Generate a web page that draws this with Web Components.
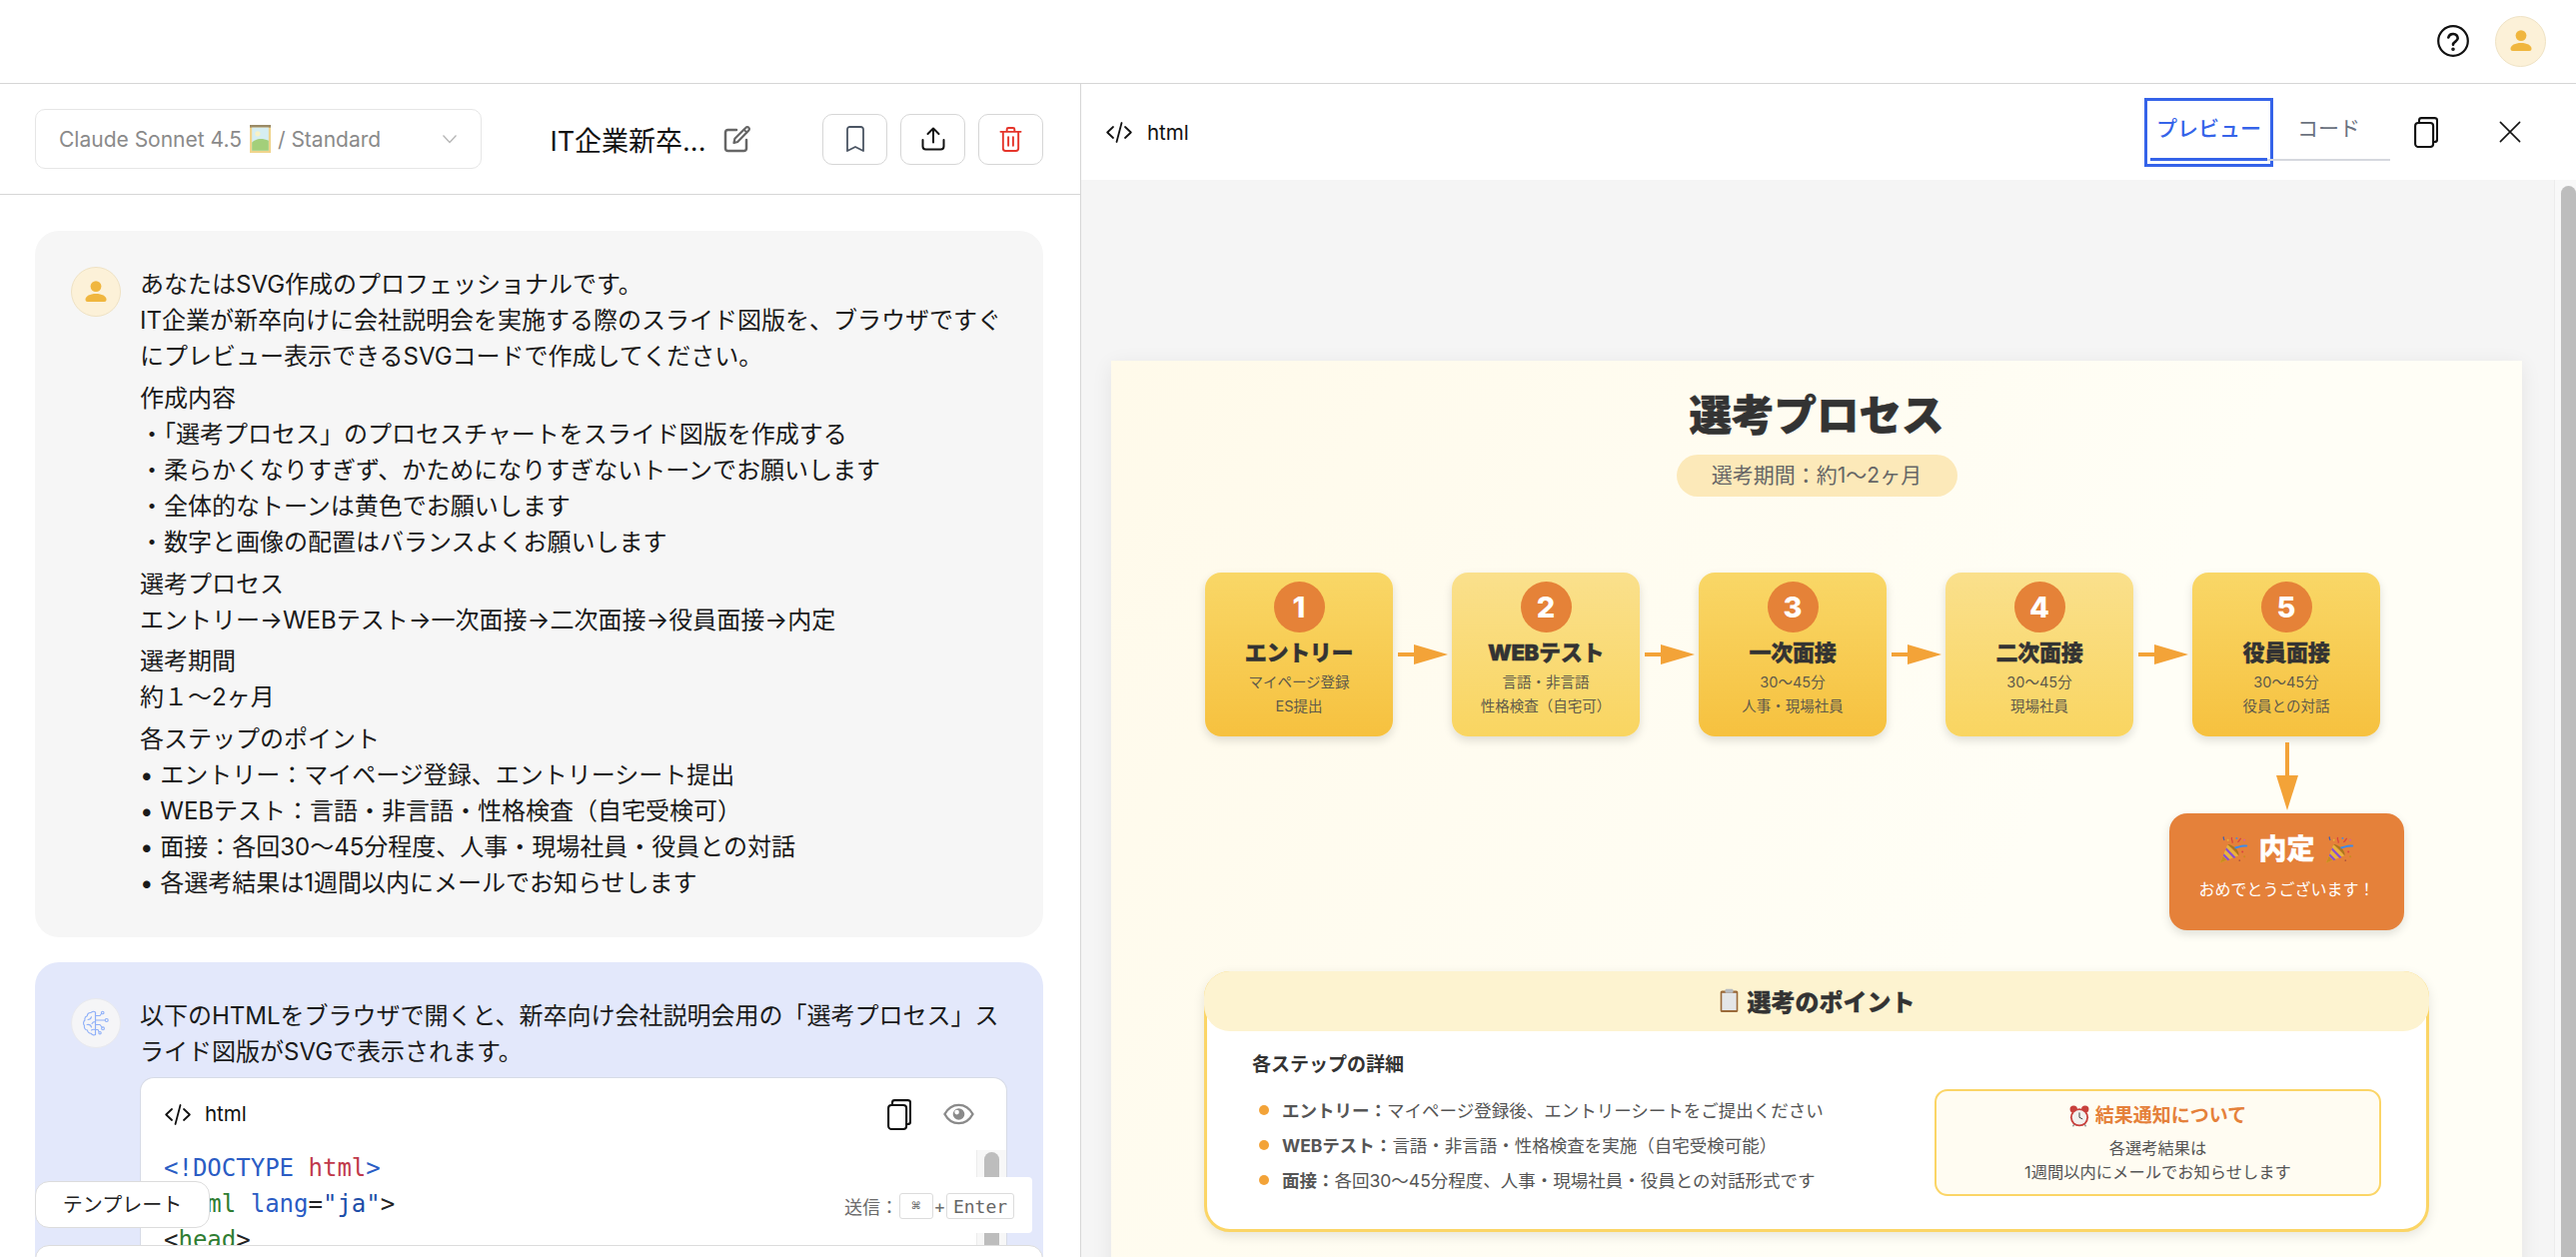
<!DOCTYPE html>
<html lang="ja">
<head>
<meta charset="utf-8">
<title>選考プロセス</title>
<style>
    html, body { margin: 0; height: 100%; overflow: hidden; background: #fff; }
    body { font-family: Inter, "Noto Sans CJK JP", sans-serif; color: #1a1a1a; }
</style>
</head>
<body>
<app-shell></app-shell>
<script>
const ICONS = {
    help: '<svg viewBox="0 0 32 32" fill="none" stroke="currentColor" stroke-width="2.200" stroke-linecap="round"><circle cx="16" cy="16" r="14.800"/><path d="M11.300 12.500a4.800 4.800 0 0 1 9.400 .8c0 3.200-4.700 3.400-4.700 6.400" stroke-width="2.600"/><circle cx="16" cy="24.200" r=".7" fill="currentColor"/></svg>',
    user: '<svg viewBox="0 0 22 22" fill="#f0b63e"><circle cx="11" cy="5.600" r="5.400"/><path d="M.5 18.800C.5 15.400 5 13 11 13s10.500 2.400 10.500 5.800c0 1.400-.8 2.200-2.200 2.200H2.700C1.300 21 .5 20.200.5 18.800z"/></svg>',
    chevron: '<svg viewBox="0 0 16 10" fill="none" stroke="currentColor" stroke-width="1.300"><path d="M1.500 1.500 8 8.500l6.500-7"/></svg>',
    edit: '<svg viewBox="0 0 28 28" fill="none" stroke="currentColor" stroke-width="2.500" stroke-linecap="round" stroke-linejoin="round"><path d="M13 5H4.500a2.500 2.500 0 0 0-2.500 2.500v16A2.500 2.500 0 0 0 4.500 26h16a2.500 2.500 0 0 0 2.500-2.500V15"/><path d="M10.500 18l.9-4.200L22.500 2.700a1.900 1.900 0 0 1 2.800 0 1.900 1.900 0 0 1 0 2.800L14.200 17z" stroke-width="2.200"/><path d="M20.500 4.700l2.800 2.800" stroke-width="1.800"/></svg>',
    bookmark: '<svg viewBox="0 0 18 26" fill="none" stroke="currentColor" stroke-width="1.800" stroke-linejoin="round"><path d="M1 3.500A2.500 2.500 0 0 1 3.500 1h11A2.500 2.500 0 0 1 17 3.500V25l-8-4-8 4z"/></svg>',
    upload: '<svg viewBox="0 0 24 24" fill="none" stroke="currentColor" stroke-width="2" stroke-linecap="round" stroke-linejoin="round"><path d="M12 15.500V1.500M6.500 7 12 1.500 17.500 7"/><path d="M1.500 13v6.500a3 3 0 0 0 3 3h15a3 3 0 0 0 3-3V13"/></svg>',
    trash: '<svg viewBox="0 0 24 27" fill="none" stroke="currentColor" stroke-width="2" stroke-linecap="round" stroke-linejoin="round"><path d="M1.500 5.500h21M8 5.500V3A1.500 1.500 0 0 1 9.500 1.500h5A1.500 1.500 0 0 1 16 3V5.500"/><path d="M4 5.500V23a2.500 2.500 0 0 0 2.500 2.500h11A2.500 2.500 0 0 0 20 23V5.500"/><path d="M9.500 11v9M14.500 11v9"/></svg>',
    code: '<svg viewBox="0 0 26 21" fill="none" stroke="currentColor" stroke-width="1.800" stroke-linecap="round" stroke-linejoin="round"><path d="M7 5 1.200 10.500 7 16M19 5l5.800 5.500L19 16M15.500 1l-5 19"/></svg>',
    copy: '<svg viewBox="0 0 24 31" fill="none" stroke="currentColor" stroke-width="2.100" stroke-linejoin="round"><rect x="1.100" y="6" width="18" height="24" rx="3"/><path d="M5 6V3.500A2.400 2.400 0 0 1 7.400 1.100h13.200A2.400 2.400 0 0 1 23 3.500V22.600A2.400 2.400 0 0 1 20.600 25H19"/></svg>',
    close: '<svg viewBox="0 0 24 24" fill="none" stroke="currentColor" stroke-width="1.700" stroke-linecap="round"><path d="M1.500 1.500l21 21M22.500 1.500 1.500 22.500"/></svg>',
    eye: '<svg viewBox="0 0 32 22" fill="none"><path d="M1.500 11C5 4.500 10 1.500 16 1.500S27 4.500 30.500 11C27 17.500 22 20.500 16 20.500S5 17.500 1.500 11z" stroke="#8a8a8a" stroke-width="2.400"/><circle cx="16" cy="11" r="6" fill="#8a8a8a"/><circle cx="14" cy="9" r="2.400" fill="#fff"/></svg>',
    brain: '<svg viewBox="0 0 26 26" fill="none" stroke="#8fb0f8" stroke-width="1.100" stroke-linecap="round" stroke-linejoin="round"><path d="M12.500 2.200A3 3 0 0 0 8 2.500 3.200 3.200 0 0 0 4.300 5.800 3.500 3.500 0 0 0 2 10a3.800 3.800 0 0 0-.5 5.500A3.500 3.500 0 0 0 4.500 20a3.400 3.400 0 0 0 3.800 3.200 3 3 0 0 0 4.200 1.300z"/><path d="M12.500 2.200v22.300M5 9.500c2 0 3-.8 3.500-2.800M4 14.500c2.500-.5 4 .5 4.500 2.500M12.500 11.500c-2 0-3 .8-3.500 2M8.500 20c1-.8 2.200-1 4-.5"/><path d="M12.500 5.500H17l1.500-2M12.500 10H22M12.500 14.500H17l2 2.500M12.500 19.500H15l1 2"/><circle cx="19.700" cy="2.500" r="1.300"/><circle cx="23.700" cy="10" r="1.500"/><circle cx="20" cy="18.300" r="1.400"/><circle cx="17" cy="22.700" r="1.200"/></svg>',
    picture: '<svg viewBox="0 0 24 32"><rect width="24" height="32" fill="#f0d48c"/><rect x="0" y="0" width="24" height="3" fill="#9a8a66"/><rect x="2.500" y="3" width="19" height="26.500" fill="#d6eef2"/><path d="M2.500 20c5-5 12-5 19-2v11.500h-19z" fill="#a3cf7a"/><circle cx="9" cy="10" r="3" fill="#f8f2c6"/></svg>',
    popper: '<svg viewBox="0 0 30 30"><path d="M1 28.500 8.500 9.500 20 21z" fill="#e8b43c"/><path d="M1 28.500l2.800-7 4.200 4.200z" fill="#c98a1f"/><path d="M4.800 19l6.200 6.200-2.300 1L3.900 21.300zM7.300 12.800l9.900 9.900-2.300 1L6.400 15z" fill="#8a4fd0"/><path d="M8.500 9.500c3.500 2 8.500 7 11.500 11.500 1-1.500-1-6-4-8.500s-6.500-4-7.500-3z" fill="#a8761c"/><path d="M16 13c4-.5 7-3 13-2" stroke="#3f8be8" stroke-width="2" fill="none"/><path d="M13.500 8c1-2-1.500-3-.5-6" stroke="#d8433f" stroke-width="1.300" fill="none"/><path d="M19 7c2-1 2-3 3.500-4" stroke="#d8433f" stroke-width="1.300" fill="none"/><path d="M4 1.500c1 1 0 2.500 1.500 3.500" stroke="#3f5fb0" stroke-width="1.300" fill="none"/><circle cx="18" cy="3" r="1" fill="#3f8be8"/><circle cx="26" cy="5" r="1" fill="#d85fa0"/><circle cx="24" cy="17" r="1" fill="#d8433f"/><circle cx="9" cy="5" r="1" fill="#e8b43c"/><circle cx="26" cy="22" r="1" fill="#c98a1f"/><circle cx="21" cy="26" r=".9" fill="#b0563f"/></svg>',
    clipboard: '<svg viewBox="0 0 24 30"><rect x="1" y="3" width="22" height="27" rx="2" fill="#9a6a3a"/><rect x="3" y="6" width="18" height="21.500" fill="#e4e6e8"/><rect x="7" y="1" width="10" height="5" rx="1.500" fill="#b8bcc0"/></svg>',
    alarm: '<svg viewBox="0 0 24 28"><circle cx="5" cy="5" r="4.500" fill="#c8403c"/><circle cx="19" cy="5" r="4.500" fill="#c8403c"/><path d="M4 26l2-3M20 26l-2-3" stroke="#999" stroke-width="2"/><circle cx="12" cy="15" r="11" fill="#c8403c"/><circle cx="12" cy="15" r="8.800" fill="#f2f1ee"/><path d="M12 9v6l4 2" stroke="#444" stroke-width="1.200" fill="none"/></svg>'
};

class AppIcon extends HTMLElement {
    connectedCallback() {
        const w = this.getAttribute('w') || 24;
        const h = this.getAttribute('h') || w;
        this.attachShadow({ mode: 'open' });
        this.shadowRoot.innerHTML = `
            <style>
                :host { display: inline-flex; flex: none; width: ${w}px; height: ${h}px; color: ${this.getAttribute('color') || 'inherit'}; vertical-align: middle; }
                svg { display: block; width: 100%; height: 100%; }
            </style>
            ${ICONS[this.getAttribute('name')] || ''}
        `;
    }
}

class TopBar extends HTMLElement {
    connectedCallback() {
        this.attachShadow({ mode: 'open' });
        this.shadowRoot.innerHTML = `
            <style>
                :host { display: flex; height: 83px; align-items: center; justify-content: flex-end; gap: 26px; padding-right: 30px; border-bottom: 1px solid #d6d6d6; background: #fff; }
                .avatar { display: flex; align-items: center; justify-content: center; width: 49px; height: 49px; border-radius: 50%; background: #fcf1d8; border: 1px solid #efe2c4; margin-bottom: 1px; }
                .help { margin-bottom: 1px; }
            </style>
            <app-icon class="help" name="help" w="32" color="#111"></app-icon>
            <div class="avatar"><app-icon name="user" w="22"></app-icon></div>
        `;
    }
}

class ChatHeader extends HTMLElement {
    connectedCallback() {
        this.attachShadow({ mode: 'open' });
        this.shadowRoot.innerHTML = `
            <style>
                :host { display: flex; align-items: center; height: 110px; padding: 0 37px 0 35px; border-bottom: 1px solid #d6d6d6; background: #fff; }
                .select { display: flex; align-items: center; box-sizing: border-box; width: 448px; height: 60px; padding: 0 23px; border: 1px solid #e6e6e6; border-radius: 10px; font-size: 21px; color: #8a8a8a; white-space: nowrap; }
                .select app-icon { margin: 0 6px 0 7px; }
                .select .chev { margin: 0 0 0 auto; color: #b5b5b5; }
                .title { display: flex; align-items: center; gap: 18px; margin-left: 68px; font-size: 27px; color: #111; white-space: nowrap; width: 273px; }
                .btns { display: flex; gap: 13px; margin-left: auto; }
                .btn { display: flex; align-items: center; justify-content: center; width: 65px; height: 51px; box-sizing: border-box; border: 1px solid #d6d6d6; border-radius: 10px; background: #fff; }
            </style>
            <div class="select">Claude Sonnet 4.5<app-icon name="picture" w="23" h="28"></app-icon>/ Standard<app-icon class="chev" name="chevron" w="16" h="10"></app-icon></div>
            <div class="title"><span>IT企業新卒...</span><app-icon name="edit" w="28" color="#666"></app-icon></div>
            <div class="btns">
                <div class="btn"><app-icon name="bookmark" w="18" h="26" color="#4b5563"></app-icon></div>
                <div class="btn"><app-icon name="upload" w="24" color="#111"></app-icon></div>
                <div class="btn"><app-icon name="trash" w="23" h="27" color="#e5352b"></app-icon></div>
            </div>
        `;
    }
}

class MsgCard extends HTMLElement {
    connectedCallback() {
        const bot = this.getAttribute('role-name') === 'bot';
        this.attachShadow({ mode: 'open' });
        this.shadowRoot.innerHTML = `
            <style>
                :host { display: flex; flex: none; gap: 19px; box-sizing: border-box; padding: 36px; border-radius: 24px; background: ${bot ? '#e3e8fb' : '#f6f6f6'}; font-size: 24px; line-height: 36px; color: #1a1a1a; }
                .avatar { display: flex; flex: none; align-items: center; justify-content: center; box-sizing: border-box; width: 50px; height: 50px; border-radius: 50%; background: ${bot ? '#f5f5f7' : '#fcf1d8'}; border: 1px solid ${bot ? '#e8e9ee' : '#efe2c4'}; }
                .body { flex: 1; min-width: 0; }
            </style>
            <div class="avatar"><app-icon name="${bot ? 'brain' : 'user'}" w="${bot ? 26 : 22}" h="${bot ? 26 : 22}"></app-icon></div>
            <div class="body"><slot></slot></div>
        `;
    }
}

class CodeBlock extends HTMLElement {
    connectedCallback() {
        this.attachShadow({ mode: 'open' });
        this.shadowRoot.innerHTML = `
            <style>
                :host { display: block; position: relative; margin-top: 7px; background: #fff; border: 1px solid #d7dbe6; border-bottom: 0; border-radius: 14px 14px 0 0; }
                .head { display: flex; align-items: center; height: 72px; padding: 0 32px 0 24px; gap: 14px; font-size: 20.500px; color: #111; }
                .head .copy { margin-left: auto; margin-right: 18px; }
                pre { margin: 0; padding: 0 0 0 23px; font: 24px/36px "DejaVu Sans Mono", monospace; color: #222; }
                .b { color: #2a5cc4; } .r { color: #c0394b; } .g { color: #2f7d32; } .n { color: #1d4ea8; }
                .bar { position: absolute; top: 72px; right: 0; bottom: -60px; width: 29px; background: #f7f7f7; border-left: 1px solid #ececec; }
                .thumb { width: 15px; height: 200px; margin: 2px 0 0 7px; border-radius: 8px; background: #bdbdbd; }
            </style>
            <div class="head">
                <app-icon name="code" w="26" h="21"></app-icon><span>html</span>
                <app-icon class="copy" name="copy" w="24" h="31"></app-icon>
                <app-icon name="eye" w="31" h="22"></app-icon>
            </div>
<pre><span class="b">&lt;!DOCTYPE</span> <span class="r">html</span><span class="b">&gt;</span>
<span>&lt;</span><span class="g">html</span> <span class="b">lang</span>=<span class="n">"ja"</span>&gt;
&lt;<span class="g">head</span>&gt;</pre>
            <div class="bar"><div class="thumb"></div></div>
        `;
    }
}

class ChatPanel extends HTMLElement {
    connectedCallback() {
        this.attachShadow({ mode: 'open' });
        this.shadowRoot.innerHTML = `
            <style>
                :host { display: flex; flex-direction: column; position: relative; overflow: hidden; background: #fff; }
                .scroll { flex: 1; display: flex; flex-direction: column; gap: 25px; overflow: hidden; padding: 36px 37px 0 35px; }
                p { margin: 0 0 5.750px; }
                .tmpl { position: absolute; left: 35px; top: 1098px; display: flex; align-items: center; justify-content: center; box-sizing: border-box; width: 175px; height: 47px; padding-bottom: 2px; background: #fff; border: 1px solid #dcdcdc; border-radius: 14px; font-size: 20px; color: #222; }
                .send { position: absolute; left: 830px; top: 1094px; display: flex; align-items: center; box-sizing: border-box; width: 203px; height: 56px; padding: 2px 0 0 15px; background: #fff; border-radius: 4px; font-size: 18px; color: #6b6b6b; white-space: nowrap; }
                kbd { display: flex; align-items: center; justify-content: center; box-sizing: border-box; height: 26px; border: 1px solid #dcdcdc; border-radius: 3px; font: 18px "DejaVu Sans Mono", monospace; color: #666; }
                .k1 { width: 34px; margin-left: 1px; font-size: 15px; }
                .plus { width: 13px; text-align: center; }
                .k2 { width: 68px; }
                .input { position: absolute; left: 35px; right: 37px; top: 1162px; height: 30px; box-sizing: border-box; background: #fff; border: 1px solid #dcdcdc; border-radius: 14px 14px 0 0; }
            </style>
            <chat-header></chat-header>
            <div class="scroll">
                <msg-card role-name="user">
                    <p>あなたはSVG作成のプロフェッショナルです。<br>IT企業が新卒向けに会社説明会を実施する際のスライド図版を、ブラウザですぐにプレビュー表示できるSVGコードで作成してください。</p>
                    <p>作成内容<br>・「選考プロセス」のプロセスチャートをスライド図版を作成する<br>・柔らかくなりすぎず、かためになりすぎないトーンでお願いします<br>・全体的なトーンは黄色でお願いします<br>・数字と画像の配置はバランスよくお願いします</p>
                    <p>選考プロセス<br>エントリー→WEBテスト→一次面接→二次面接→役員面接→内定</p>
                    <p>選考期間<br>約１〜2ヶ月</p>
                    <p style="margin:0">各ステップのポイント<br>• エントリー：マイページ登録、エントリーシート提出<br>• WEBテスト：言語・非言語・性格検査（自宅受検可）<br>• 面接：各回30〜45分程度、人事・現場社員・役員との対話<br>• 各選考結果は1週間以内にメールでお知らせします</p>
                </msg-card>
                <msg-card role-name="bot">
                    <div>以下のHTMLをブラウザで開くと、新卒向け会社説明会用の「選考プロセス」スライド図版がSVGで表示されます。</div>
                    <code-block></code-block>
                </msg-card>
            </div>
            <div class="input"></div>
            <div class="tmpl">テンプレート</div>
            <div class="send">送信：<kbd class="k1">⌘</kbd><span class="plus">+</span><kbd class="k2">Enter</kbd></div>
        `;
    }
}

class PreviewHeader extends HTMLElement {
    connectedCallback() {
        this.attachShadow({ mode: 'open' });
        this.shadowRoot.innerHTML = `
            <style>
                :host { display: flex; align-items: center; height: 96px; padding-left: 25px; background: #fff; font-size: 20.500px; color: #111; }
                .name { margin-left: 15px; }
                .tabs { display: flex; margin-left: auto; height: 57px; }
                .tab { display: flex; align-items: center; justify-content: center; box-sizing: border-box; height: 57px; padding-bottom: 8px; font-size: 21px; }
                .on { width: 117px; color: #3563e9; border-bottom: 3px solid #3563e9; outline: 3px solid #3563e9; outline-offset: 3px; font-weight: 500; }
                .off { width: 123px; color: #6b7280; border-bottom: 2px solid #d5d8de; }
                .copy { margin-left: 24px; }
                .close { margin: 0 55px 0 61px; }
            </style>
            <app-icon name="code" w="26" h="21"></app-icon><span class="name">html</span>
            <div class="tabs"><div class="tab on">プレビュー</div><div class="tab off">コード</div></div>
            <app-icon class="copy" name="copy" w="24" h="31"></app-icon>
            <app-icon class="close" name="close" w="22"></app-icon>
        `;
    }
}

class StepCard extends HTMLElement {
    connectedCallback() {
        const light = this.hasAttribute('light');
        this.attachShadow({ mode: 'open' });
        this.shadowRoot.innerHTML = `
            <style>
                :host { display: flex; flex-direction: column; align-items: center; flex: none; box-sizing: border-box; width: 188px; height: 164px; padding-top: 9px; border-radius: 16px; text-align: center; background: ${light ? 'linear-gradient(#fae08c, #f9d561)' : 'linear-gradient(#f9d767, #f6c13f)'}; box-shadow: 0 4px 10px rgba(0,0,0,.13); }
                .num { display: flex; align-items: center; justify-content: center; width: 51px; height: 51px; border-radius: 50%; background: #e58238; color: #fff; font: 800 29px Inter, sans-serif; }
                .t { margin-top: 2px; font-size: 22px; font-weight: 900; -webkit-text-stroke: .4px #333; line-height: 36px; color: #333; white-space: nowrap; letter-spacing: -.3px; }
                .s { font-size: 14.500px; line-height: 24px; color: #5f5a4a; white-space: nowrap; }
            </style>
            <div class="num">${this.getAttribute('n')}</div>
            <div class="t">${this.getAttribute('label')}</div>
            <div class="s"><slot></slot></div>
        `;
    }
}

class FlowArrow extends HTMLElement {
    connectedCallback() {
        this.attachShadow({ mode: 'open' });
        this.shadowRoot.innerHTML = `
            <style>
                :host { display: flex; flex: none; align-items: center; justify-content: center; width: 59px; }
                svg { display: block; width: 50px; height: 22px; }
            </style>
            <svg viewBox="0 0 50 22"><rect x="0" y="9" width="18" height="4" fill="#f3a338"/><path d="M16 1 50 11 16 21z" fill="#f3a338"/></svg>
        `;
    }
}

class PointsCard extends HTMLElement {
    connectedCallback() {
        this.attachShadow({ mode: 'open' });
        this.shadowRoot.innerHTML = `
            <style>
                :host { display: block; box-sizing: border-box; width: 1226px; height: 261px; margin: 41px 0 0 93px; background: #fff; border: 3px solid #fbd566; border-radius: 26px; box-shadow: 0 4px 12px rgba(0,0,0,.1); }
                .head { display: flex; align-items: center; justify-content: center; gap: 8px; box-sizing: border-box; height: 60px; margin: -3px -3px 0; padding-bottom: 2px; border-radius: 26px; background: #fdf3d0; font-size: 24px; font-weight: 900; -webkit-text-stroke: .3px #333; color: #333; }
                .body { display: flex; justify-content: space-between; padding: 17px 45px 0 45px; }
                h4 { margin: 0 0 10px; font-size: 19px; line-height: 34px; font-weight: 700; color: #333; }
                ul { margin: 0; padding: 0; list-style: none; }
                li { display: flex; align-items: center; height: 35px; font-size: 17.500px; color: #555; white-space: nowrap; }
                li::before { content: ""; width: 10px; height: 10px; margin: 0 13px 0 7px; border-radius: 50%; background: #f3a338; }
                b { color: #555; font-weight: 700; }
                .note { box-sizing: border-box; width: 447px; height: 107px; margin-top: 41px; text-align: center; background: #fffcf2; border: 2.500px solid #fbd566; border-radius: 13px; }
                .note h5 { display: flex; align-items: center; justify-content: center; gap: 6px; margin: 11px 0 6px; font-size: 19px; line-height: 28px; color: #e5813a; font-weight: 700; }
                .note div { font-size: 16.300px; line-height: 24px; color: #555; }
            </style>
            <div class="head"><app-icon name="clipboard" w="21" h="24"></app-icon><span>選考のポイント</span></div>
            <div class="body">
                <div>
                    <h4>各ステップの詳細</h4>
                    <ul>
                        <li><b>エントリー：</b>マイページ登録後、エントリーシートをご提出ください</li>
                        <li><b>WEBテスト：</b>言語・非言語・性格検査を実施（自宅受検可能）</li>
                        <li><b>面接：</b>各回30〜45分程度、人事・現場社員・役員との対話形式です</li>
                    </ul>
                </div>
                <div class="note">
                    <h5><app-icon name="alarm" w="20" h="23"></app-icon><span>結果通知について</span></h5>
                    <div>各選考結果は<br>1週間以内にメールでお知らせします</div>
                </div>
            </div>
        `;
    }
}

class SelectionSlide extends HTMLElement {
    connectedCallback() {
        this.attachShadow({ mode: 'open' });
        this.shadowRoot.innerHTML = `
            <style>
                :host { display: block; box-sizing: border-box; width: 1412px; height: 1000px; padding-top: 25px; background: linear-gradient(120deg, #fffaea, #fffef6 60%); box-shadow: 0 4px 20px rgba(0,0,0,.07); }
                .title { text-align: center; font-size: 42.500px; font-weight: 900; -webkit-text-stroke: .6px #333; line-height: 60px; color: #333; }
                .pill { width: 281px; height: 42px; margin: 9px auto 0; text-align: center; border-radius: 21px; background: #fce9b9; font-size: 21px; line-height: 41px; color: #666; white-space: nowrap; }
                .steps { display: flex; margin: 76px 0 0 94px; }
                .result { display: flex; flex-direction: column; align-items: center; width: 235px; margin-left: 1059px; }
                .down { display: block; width: 22px; height: 68px; margin: 6px 0 3px; }
                .offer { display: flex; flex-direction: column; align-items: center; box-sizing: border-box; width: 235px; height: 117px; padding-top: 15px; border-radius: 18px; background: #e5813a; color: #fff; box-shadow: 0 4px 10px rgba(0,0,0,.12); }
                .offer .t { display: flex; align-items: center; gap: 10px; font-size: 28px; font-weight: 900; -webkit-text-stroke: .4px #fff; line-height: 42px; }
                .offer .s { margin-top: 7px; font-size: 16px; line-height: 24px; white-space: nowrap; }
            </style>
            <div class="title">選考プロセス</div>
            <div class="pill">選考期間：約1〜2ヶ月</div>
            <div class="steps">
                <step-card n="1" label="エントリー">マイページ登録<br>ES提出</step-card>
                <flow-arrow></flow-arrow>
                <step-card n="2" label="WEBテスト" light>言語・非言語<br>性格検査（自宅可）</step-card>
                <flow-arrow></flow-arrow>
                <step-card n="3" label="一次面接">30〜45分<br>人事・現場社員</step-card>
                <flow-arrow></flow-arrow>
                <step-card n="4" label="二次面接" light>30〜45分<br>現場社員</step-card>
                <flow-arrow></flow-arrow>
                <step-card n="5" label="役員面接">30〜45分<br>役員との対話</step-card>
            </div>
            <div class="result">
                <svg class="down" viewBox="0 0 22 68"><rect x="9" y="0" width="4" height="36" fill="#f3a338"/><path d="M0 33H22L11 68z" fill="#f3a338"/></svg>
                <div class="offer">
                    <div class="t"><app-icon name="popper" w="29" h="29"></app-icon><span>内定</span><app-icon name="popper" w="29" h="29"></app-icon></div>
                    <div class="s">おめでとうございます！</div>
                </div>
            </div>
            <points-card></points-card>
        `;
    }
}

class PreviewPanel extends HTMLElement {
    connectedCallback() {
        this.attachShadow({ mode: 'open' });
        this.shadowRoot.innerHTML = `
            <style>
                :host { display: flex; flex-direction: column; overflow: hidden; border-left: 1px solid #d6d6d6; background: #fff; }
                .view { flex: 1; display: flex; min-height: 0; background: #f5f5f5; overflow: hidden; }
                .canvas { flex: 1; padding: 181px 0 0 30px; overflow: hidden; }
                .track { flex: none; width: 22px; padding-top: 6px; box-sizing: border-box; background: #f8f8f8; border-left: 1px solid #ececec; }
                .thumb { width: 15px; height: 100%; margin-left: 6px; border-radius: 8px 8px 0 0; background: #bdbdbd; }
            </style>
            <preview-header></preview-header>
            <div class="view">
                <div class="canvas"><selection-slide></selection-slide></div>
                <div class="track"><div class="thumb"></div></div>
            </div>
        `;
    }
}

class AppShell extends HTMLElement {
    connectedCallback() {
        this.attachShadow({ mode: 'open' });
        this.shadowRoot.innerHTML = `
            <style>
                :host { display: flex; flex-direction: column; height: 1258px; overflow: hidden; }
                .main { flex: 1; min-height: 0; display: grid; grid-template-columns: 1081px 1fr; }
            </style>
            <top-bar></top-bar>
            <div class="main">
                <chat-panel></chat-panel>
                <preview-panel></preview-panel>
            </div>
        `;
    }
}

customElements.define('app-icon', AppIcon);
customElements.define('top-bar', TopBar);
customElements.define('chat-header', ChatHeader);
customElements.define('msg-card', MsgCard);
customElements.define('code-block', CodeBlock);
customElements.define('chat-panel', ChatPanel);
customElements.define('preview-header', PreviewHeader);
customElements.define('step-card', StepCard);
customElements.define('flow-arrow', FlowArrow);
customElements.define('points-card', PointsCard);
customElements.define('selection-slide', SelectionSlide);
customElements.define('preview-panel', PreviewPanel);
customElements.define('app-shell', AppShell);
</script>
</body>
</html>
